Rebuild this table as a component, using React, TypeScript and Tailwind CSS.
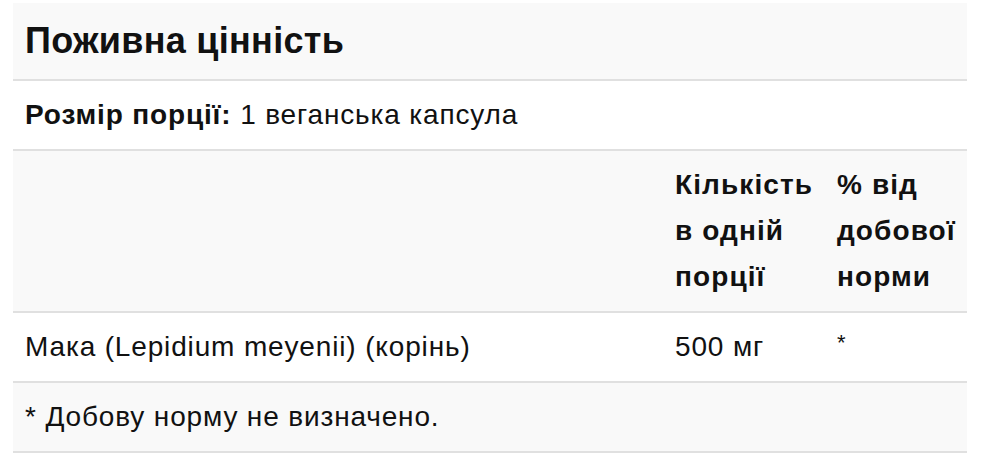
import React from "react";

const cell = "px-3 py-[11px] leading-[46px]";

export default function App() {
  return (
    <div
      className="w-[1000px] h-[475px] bg-white pt-[3px] pl-[13px] text-[#111]"
      style={{ fontFamily: '"Liberation Sans", Arial, sans-serif' }}
    >
      <div className="w-[954px] text-[28px] tracking-[0.85px]">
        {/* Title */}
        <div className="bg-[#f9f9f9] border-b-2 border-[#e0e0e0] px-3 py-[11px]">
          <h2 className="text-[36px] font-bold leading-[54px] tracking-[0.3px]">Поживна цінність</h2>
        </div>
        {/* Serving size */}
        <div className={`bg-white border-b-2 border-[#e0e0e0] ${cell}`}>
          <span className="font-bold">Розмір порції:</span> 1 веганська капсула
        </div>
        {/* Header */}
        <div className="flex bg-[#f9f9f9] border-b-2 border-[#e0e0e0] font-bold tracking-[1.1px]">
          <div className={`w-[650px] ${cell}`}></div>
          <div className={`w-[162px] ${cell} whitespace-nowrap`}>
            <div>Кількість</div>
            <div>в одній</div>
            <div>порції</div>
          </div>
          <div className={`w-[142px] ${cell} whitespace-nowrap`}>
            <div>% від</div>
            <div>добової</div>
            <div>норми</div>
          </div>
        </div>
        {/* Maca */}
        <div className="flex bg-white border-b-2 border-[#e0e0e0]">
          <div className={`w-[650px] ${cell}`}>Мака (Lepidium meyenii) (корінь)</div>
          <div className={`w-[162px] ${cell} whitespace-nowrap`}>500 мг</div>
          <div className={`w-[142px] ${cell}`}>
            <span className="text-[22px] align-top relative top-[-4px]">*</span>
          </div>
        </div>
        {/* Footnote */}
        <div className={`bg-[#f9f9f9] border-b-2 border-[#e0e0e0] ${cell}`}>
          * Добову норму не визначено.
        </div>
      </div>
    </div>
  );
}
